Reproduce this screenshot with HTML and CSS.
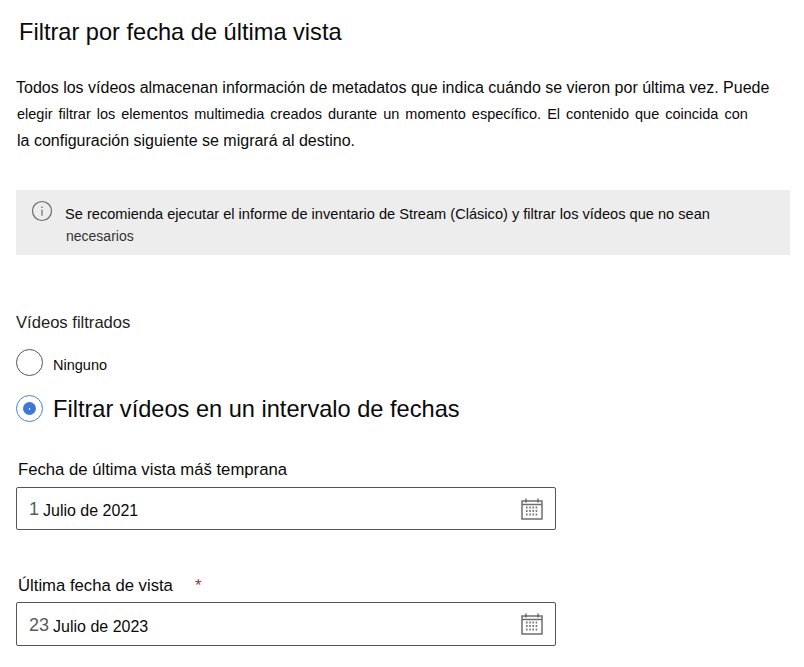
FILE: index.html
```html
<!DOCTYPE html>
<html lang="es">
<head>
<meta charset="utf-8">
<title>Filtrar por fecha de última vista</title>
<link rel="stylesheet" href="styles.css">
</head>
<body>
<main class="page">
  <h1 class="title">Filtrar por fecha de última vista</h1>
  <p class="intro">
    <span class="line line-a">Todos los vídeos almacenan información de metadatos que indica cuándo se vieron por última vez. Puede</span>
    <span class="line line-b">elegir filtrar los elementos multimedia creados durante un momento específico. El contenido que coincida con</span>
    <span class="line line-c">la configuración siguiente se migrará al destino.</span>
  </p>
  <div class="notice">
    <svg class="info" width="22" height="22" viewBox="0 0 22 22" aria-hidden="true">
      <circle cx="11" cy="11" r="9.5" fill="none" stroke="#6a6a6a" stroke-width="1.2"/>
      <path d="M11 9.8v6" stroke="#6a6a6a" stroke-width="1.2" fill="none"/>
      <circle cx="11" cy="7.2" r=".8" fill="#6a6a6a"/>
    </svg>
    <p class="notice-text">
      <span class="notice-a">Se recomienda ejecutar el informe de inventario de Stream (Clásico) y filtrar los vídeos que no sean</span>
      <span class="notice-b">necesarios</span>
    </p>
  </div>
  <div class="group-label">Vídeos filtrados</div>
  <div class="radio-row radio-none">
    <span class="radio"></span>
    <span class="radio-small">Ninguno</span>
  </div>
  <div class="radio-row radio-range">
    <span class="radio radio-on"><span class="dot"></span></span>
    <span class="radio-large">Filtrar vídeos en un intervalo de fechas</span>
  </div>
  <div class="field-label first-label">Fecha de última vista máš temprana</div>
  <div class="date-input date-first">
    <span class="day">1</span><span class="rest">Julio de 2021</span>
    <svg class="cal" width="24" height="24" viewBox="0 0 24 24" aria-hidden="true"><use href="#cal"/></svg>
  </div>
  <div class="field-label second-label">Última fecha de vista<span class="req">*</span></div>
  <div class="date-input date-second">
    <span class="day day-wide">23</span><span class="rest">Julio de 2023</span>
    <svg class="cal" width="24" height="24" viewBox="0 0 24 24" aria-hidden="true"><use href="#cal"/></svg>
  </div>
</main>
<svg class="defs" width="0" height="0" aria-hidden="true">
  <symbol id="cal" viewBox="0 0 24 24">
    <rect x="2" y="4" width="20" height="18" fill="none" stroke="#6e6e6e" stroke-width="1.5"/>
    <path d="M2 7.5h20" stroke="#6e6e6e" stroke-width="1.5" fill="none"/>
    <path d="M6 1.5v4M18 1.5v4" stroke="#5e5e5e" stroke-width="1.3" fill="none"/>
    <path d="M6 10.5h12M6 14h12M6 17.5h12" stroke="#777" stroke-width="1.8" stroke-dasharray="1.6 1.6" fill="none"/>
  </symbol>
</svg>
</body>
</html>
```

FILE: styles.css
```css
* { box-sizing: border-box; }
html, body { margin: 0; padding: 0; background: #fff; }
body {
  font-family: "Liberation Sans", Arial, sans-serif;
  color: #0a0a0a;
  overflow: hidden;
}
.page { width: 804px; height: 667px; padding: 19px 14px 0 16px; }
.title { margin: 0 0 0 3px; font-size: 23.6px; line-height: 26px; font-weight: 400; }
.intro { margin: 30px 0 0; }
.line { display: block; white-space: nowrap; }
.line-a { font-size: 16px; line-height: 26px; }
.line-b { font-size: 14.5px; line-height: 26px; word-spacing: 2px; margin-left: 1px; }
.line-c { font-size: 16px; line-height: 28px; margin-left: 1px; }
.notice {
  display: flex;
  margin-top: 35px;
  height: 65px;
  width: 774px;
  background: #ededed;
  padding: 10px 0 0 15px;
}
.info { flex: none; margin-right: 12px; }
.notice-text { margin: 3px 0 0; font-size: 14.6px; }
.notice-a { display: block; line-height: 22px; white-space: nowrap; }
.notice-b { display: block; line-height: 22px; font-size: 14px; color: #333; margin-left: 1px; }
.group-label { margin-top: 58px; font-size: 16.6px; line-height: 20px; color: #222; }
.radio-row { display: flex; align-items: center; }
.radio {
  flex: none;
  width: 27px;
  height: 27px;
  border-radius: 50%;
  border: 1.3px solid #555;
  display: flex;
  align-items: center;
  justify-content: center;
  margin-right: 10px;
}
.radio-none { margin-top: 16px; }
.radio-small { font-size: 14.5px; line-height: 1; padding-top: 5px; }
.radio-range { margin-top: 19px; }
.radio-on { border-color: #4a7fd8; }
.dot {
  width: 13px;
  height: 13px;
  border-radius: 50%;
  background: #3f77d6;
  display: flex;
  align-items: center;
  justify-content: center;
}
.dot::after { content: ""; width: 1.5px; height: 2px; background: #fff; }
.radio-large { font-size: 23.6px; line-height: 1; padding-top: 3px; }
.field-label { margin-left: 2px; font-size: 16.7px; line-height: 20px; }
.first-label { margin-top: 38px; }
.second-label { margin-top: 46px; }
.req { color: #8f3a3a; margin-left: 22px; }
.date-input {
  display: flex;
  align-items: center;
  width: 540px;
  border: 1px solid #555;
  border-radius: 2px;
  padding: 0 11px 0 12px;
  font-size: 16px;
}
.date-first { height: 43px; margin-top: 7px; }
.date-second { height: 44px; margin-top: 6px; }
.date-input .rest { padding-top: 5px; }
.day { font-size: 18px; color: #5a5a5a; margin-right: 4px; padding-top: 2px; }
.rest { flex: 1; }
.cal { flex: none; }
.defs { position: absolute; }
```
